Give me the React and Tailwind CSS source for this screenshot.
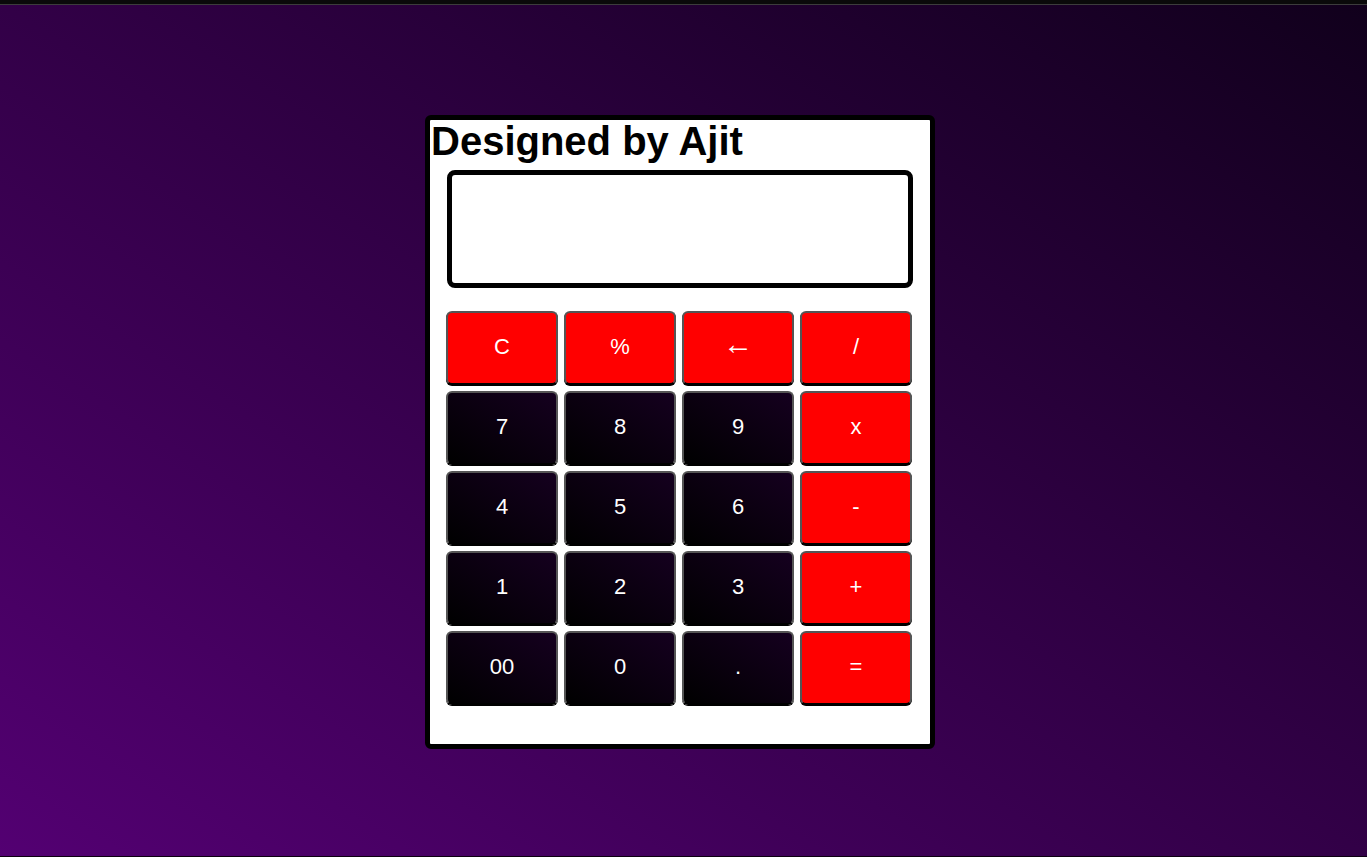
import React from 'react';

const keys = [
  ['C', 'op'], ['%', 'op'], ['←', 'op'], ['/', 'op'],
  ['7', 'num'], ['8', 'num'], ['9', 'num'], ['x', 'op'],
  ['4', 'num'], ['5', 'num'], ['6', 'num'], ['-', 'op'],
  ['1', 'num'], ['2', 'num'], ['3', 'num'], ['+', 'op'],
  ['00', 'num'], ['0', 'num'], ['.', 'num'], ['=', 'op'],
];

export default function App() {
  return (
    <div className="h-[857px] flex flex-col bg-black font-['Liberation_Sans',Arial,sans-serif]">
      <div className="h-[4px] bg-[#0a0a0a]" />
      <div className="h-px bg-[#3c3c3c]" />
      <main className="flex-1 flex justify-center pr-[7px] pt-[110px] bg-[linear-gradient(to_top_right,#530072,#11001c)]">
        <div className="w-[510px] h-[634px] bg-white border-[5px] border-black rounded-md">
          <h1 className="text-[40px] leading-[42px] font-bold text-black pl-px">Designed by Ajit</h1>
          <div className="ml-[17px] mt-[8px] w-[466px] h-[118px] border-[5px] border-black rounded-lg" />
          <div className="ml-[16px] mt-[23px] grid grid-cols-[repeat(4,112px)] auto-rows-[74px] gap-[6px]">
            {keys.map(([label, kind]) => (
              <button
                key={label}
                className={
                  'flex items-center justify-center text-white rounded-md border-2 border-[#555] border-b-black shadow-[0_1px_0_#000] ' +
                  (label === '←' ? 'text-[30px] leading-none pb-[8px] ' : 'text-[22px] leading-none pb-[2px] ') +
                  (kind === 'op'
                    ? 'bg-[#ff0000]'
                    : 'bg-[linear-gradient(to_top_right,#000000,#15001f)]')
                }
              >
                {label}
              </button>
            ))}
          </div>
        </div>
      </main>
      <div className="h-px bg-[#0d0012]" />
    </div>
  );
}
